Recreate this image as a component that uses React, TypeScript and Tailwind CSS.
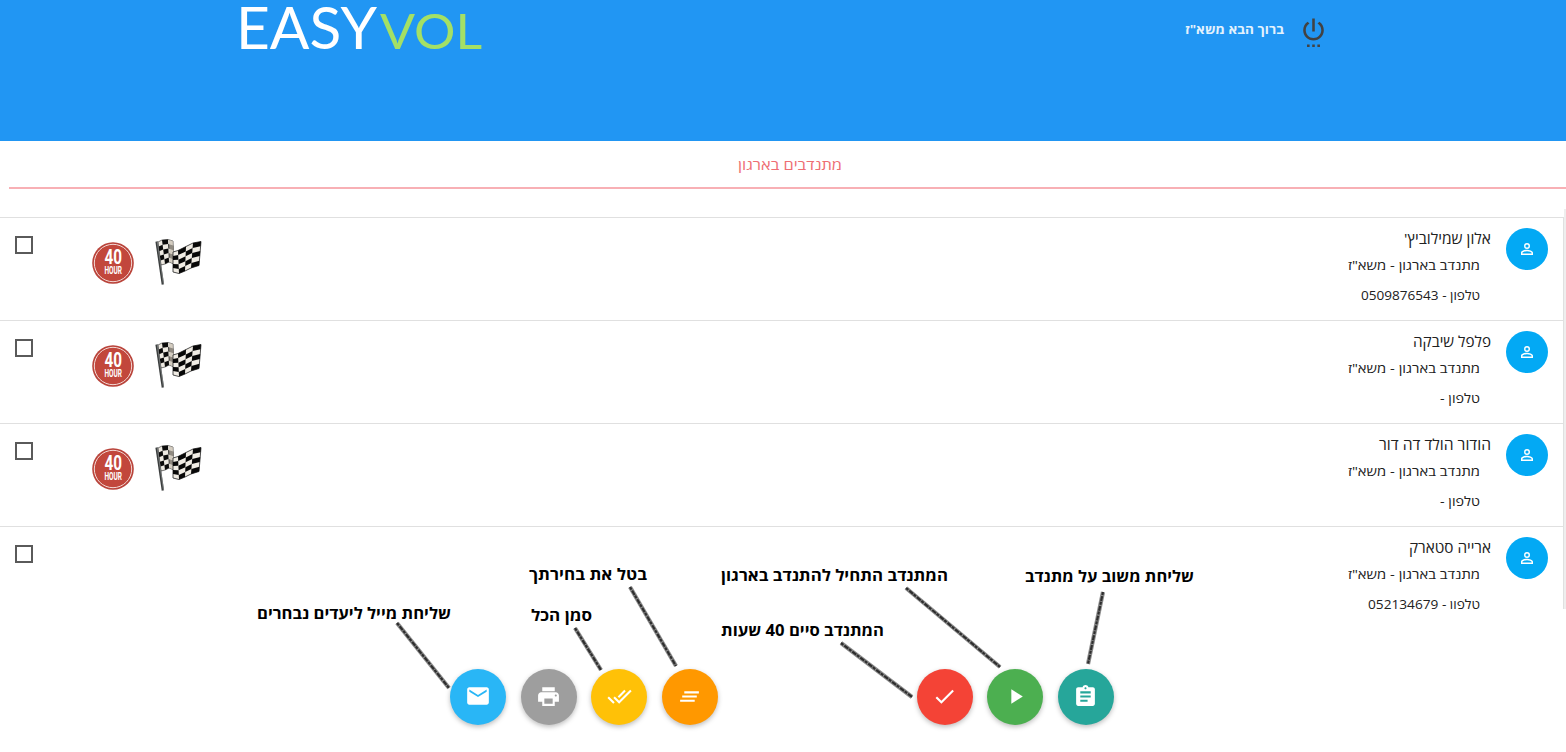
import type { ReactNode } from "react";

type Point = [number, number];

const volunteers = [
  { name: "אלון שמילוביץ'", nameWidth: 87, phone: "0509876543", phoneWidth: 119, awarded: true },
  { name: "פלפל שיבקה", nameWidth: 78, phone: "", phoneWidth: 40, awarded: true },
  { name: "הודור הולד דה דור", nameWidth: 112, phone: "", phoneWidth: 40, awarded: true },
  { name: "ארייה סטארק", nameWidth: 82, phone: "052134679", phoneWidth: 112, awarded: false },
];

/* Builds the dark squares of a chequered cloth stretched between two edges. */
function darkSquares(top: Point[], bottom: Point[], rows: number, parity: number) {
  const at = (c: number, r: number) => {
    const t = r / rows;
    return `${top[c][0] + (bottom[c][0] - top[c][0]) * t},${top[c][1] + (bottom[c][1] - top[c][1]) * t}`;
  };
  const out: string[] = [];
  for (let c = 0; c < top.length - 1; c++)
    for (let r = 0; r < rows; r++)
      if ((c + r) % 2 === parity) out.push([at(c, r), at(c + 1, r), at(c + 1, r + 1), at(c, r + 1)].join(" "));
  return out;
}

const leftTop: Point[] = [[10, 10], [14, 8], [20, 7.5], [25, 9]];
const leftBottom: Point[] = [[13, 33], [17, 32], [21, 30], [26, 32]];
const rightTop: Point[] = [[25, 20], [30, 18.5], [38, 14.5], [45, 11], [53, 9.5]];
const rightBottom: Point[] = [[25, 40], [31, 41.5], [37, 39], [43, 36], [51, 33.5]];
const outline = (a: Point[], b: Point[]) => [...a, ...[...b].reverse()].map((p) => p.join(",")).join(" ");

function Flag() {
  return (
    <svg width="60" height="60" viewBox="0 0 60 60" strokeLinejoin="round">
      <polygon points={outline(leftTop, leftBottom)} fill="#eeeae2" stroke="#222" strokeWidth=".6" />
      {darkSquares(leftTop, leftBottom, 5, 1).map((p) => <polygon key={p} points={p} fill="#0b0b0b" />)}
      <path d="M21 8l4 1 .6 11-.6 11-3.5-1z" fill="#c9c0b4" opacity=".7" />
      <polygon points={outline(rightTop, rightBottom)} fill="#f0ece4" stroke="#222" strokeWidth=".8" />
      {darkSquares(rightTop, rightBottom, 5, 1).map((p) => <polygon key={p} points={p} fill="#080808" />)}
      <path d="M8.6 9.5l6.3 43" stroke="#3a3d3d" strokeWidth="2.4" />
      <path d="M9.3 10l6.2 42" stroke="#9a9e9e" strokeWidth=".6" />
    </svg>
  );
}

function Badge() {
  return (
    <svg width="42" height="42" viewBox="0 0 42 42">
      <circle cx="21" cy="21" r="20.8" fill="#b9433a" />
      <circle cx="21" cy="21" r="18.7" fill="#c2473c" stroke="#f3dad6" strokeWidth="1" />
      <text x="12.5" y="22.3" textLength="17.5" lengthAdjust="spacingAndGlyphs" fontFamily="Roboto, sans-serif" fontWeight="700" fontSize="20" fill="#fff">40</text>
      <text x="12.5" y="32" textLength="17.5" lengthAdjust="spacingAndGlyphs" fontFamily="Roboto, sans-serif" fontWeight="700" fontSize="10.5" fill="#fff">HOUR</text>
    </svg>
  );
}

/* A right-to-left line of text fitted to a measured width. */
function Line({ children, width, size, y = 16, bold = false, fill = "#212121" }: { children: string; width: number; size: number; y?: number; bold?: boolean; fill?: string }) {
  return (
    <svg width={width} height="22" className="block shrink-0 overflow-visible">
      <text x={width} y={y} direction="rtl" textLength={width} lengthAdjust="spacingAndGlyphs" fontFamily="'Open Sans', 'Noto Sans', sans-serif" fontSize={size} fontWeight={bold ? 700 : 400} fill={fill}>{children}</text>
    </svg>
  );
}

function Icon({ d, size = 24, fill = "#fff" }: { d: string; size?: number; fill?: string }) {
  return <svg width={size} height={size} viewBox="0 0 24 24"><path d={d} fill={fill} /></svg>;
}

function Fab({ color, children }: { color: string; children: ReactNode }) {
  return (
    <button className={`flex size-14 shrink-0 items-center justify-center rounded-full pb-0.5 shadow-[0_2px_5px_rgba(0,0,0,0.26)] ${color}`}>
      {children}
    </button>
  );
}

const notes = [
  { text: "שליחת מייל ליעדים נבחרים", box: "left-[257px] top-[603px]", width: 194 },
  { text: "בטל את בחירתך", box: "left-[529px] top-[564px]", width: 118 },
  { text: "סמן הכל", box: "left-[531px] top-[605px]", width: 61 },
  { text: "המתנדב התחיל להתנדב בארגון", box: "left-[721px] top-[565px]", width: 227 },
  { text: "המתנדב סיים 40 שעות", box: "left-[721px] top-[620px]", width: 163 },
  { text: "שליחת משוב על מתנדב", box: "left-[1025px] top-[566px]", width: 169 },
];

const pointers = [
  [397, 623, 449, 688],
  [630, 587, 676, 666],
  [575, 628, 601, 670],
  [906, 588, 1000, 667],
  [841, 643, 912, 697],
  [1103, 592, 1088, 664],
];

export default function App() {
  return (
    <div className="relative flex h-[752px] w-[1566px] flex-col overflow-hidden bg-white">
      <header className="flex h-[141px] shrink-0 items-start justify-between bg-[#2196f3] pr-[237px] pl-[240px]">
        <svg width="242" height="60" viewBox="0 0 242 60" fontFamily="Lato, sans-serif" fontWeight="400">
          <text x="-4" y="49" textLength="141" lengthAdjust="spacingAndGlyphs" fontSize="59" fill="#fff">EASY</text>
          <text x="140" y="49" textLength="102" lengthAdjust="spacingAndGlyphs" fontSize="48.5" fill="#a4e065">VOL</text>
        </svg>
        <div className="flex items-start gap-3.5">
          <div className="pt-[18px]"><Line width={99} size={13} bold fill="#e3f2fd">ברוך הבא משא"ז</Line></div>
          <div className="pt-4">
            <Icon size={31} fill="#424242" d="M7 24h2v-2H7v2zm4 0h2v-2h-2v2zm2-22h-2v10h2V2zm3.56 2.44l-1.45 1.45C16.84 6.94 18 8.83 18 11c0 3.31-2.69 6-6 6s-6-2.69-6-6c0-2.17 1.16-4.06 2.88-5.12L7.44 4.44C5.36 5.88 4 8.28 4 11c0 4.42 3.58 8 8 8s8-3.58 8-8c0-2.72-1.36-5.12-3.44-6.56zM15 24h2v-2h-2v2z" />
          </div>
        </div>
      </header>

      <nav className="ml-[9px] flex h-12 shrink-0 items-start justify-center border-b-2 border-[#f8b0b5] pt-[13px] pl-[4px]">
        <Line width={104} size={14} fill="#ee6e73">מתנדבים בארגון</Line>
      </nav>

      <main className="mt-5 flex h-[400px] shrink-0 overflow-hidden pt-2">
        <ul className="w-[1564px] shrink-0 border-r border-[#e0e0e0]">
          {volunteers.map((v) => (
            <li key={v.name} className="flex h-[103px] items-start border-t border-[#e0e0e0]">
              <span className="mt-[18px] ml-[15px] size-[18px] border-2 border-[#5a5a5a]" />
              {v.awarded && (
                <div className="ml-[59px] flex items-start gap-[14px] pt-[14px]">
                  <div className="pt-[10px]"><Badge /></div>
                  <Flag />
                </div>
              )}
              <div className="mr-[15px] ml-auto flex gap-[15px] pt-2.5">
                <div className="flex flex-col items-end">
                  <Line width={v.nameWidth} size={15}>{v.name}</Line>
                  <div className="mt-1 mr-[11px] flex flex-col items-end gap-2">
                    <Line width={132} size={13}>מתנדב בארגון - משא"ז</Line>
                    <Line width={v.phoneWidth} size={13}>{v.phone ? `טלפון - ${v.phone}` : "טלפון -"}</Line>
                  </div>
                </div>
                <span className="flex size-[42px] items-center justify-center rounded-full bg-[#03a9f4]">
                  <Icon size={18} d="M12 5.9a2.1 2.1 0 1 1 0 4.2 2.1 2.1 0 0 1 0-4.2m0 9c2.97 0 6.1 1.46 6.1 2.1v1.1H5.9V17c0-.64 3.13-2.1 6.1-2.1M12 4a4 4 0 1 0 0 8 4 4 0 0 0 0-8zm0 9c-2.67 0-8 1.34-8 4v3h16v-3c0-2.66-5.33-4-8-4z" />
                </span>
              </div>
            </li>
          ))}
        </ul>
        <span className="-mt-2 flex-1 bg-[#eeeeee]" />
      </main>

      <footer className="flex pt-[60px] pl-[450px]">
        <div className="flex gap-[14.5px]">
          <Fab color="bg-[#29b6f6]"><Icon size={26} d="M20 4H4c-1.1 0-1.99.9-1.99 2L2 18c0 1.1.9 2 2 2h16c1.1 0 2-.9 2-2V6c0-1.1-.9-2-2-2zm0 4l-8 5-8-5V6l8 5 8-5v2z" /></Fab>
          <Fab color="bg-[#9e9e9e]"><Icon size={25} d="M19 8H5c-1.66 0-3 1.34-3 3v6h4v4h12v-4h4v-6c0-1.66-1.34-3-3-3zm-3 11H8v-5h8v5zm3-7c-.55 0-1-.45-1-1s.45-1 1-1 1 .45 1 1-.45 1-1 1zm-1-9H6v4h12V3z" /></Fab>
          <Fab color="bg-[#ffc107]"><Icon size={25} d="M18 7l-1.41-1.41-6.34 6.34 1.41 1.41L18 7zm4.24-1.41L11.66 16.17 7.48 12l-1.41 1.41L11.66 19l12-12-1.42-1.41zM.41 13.41L6 19l1.41-1.41L1.83 12 .41 13.41z" /></Fab>
          <Fab color="bg-[#ff9800]"><Icon size={25} d="M5 13h14v-2H5v2zm-2 4h14v-2H3v2zM7 7v2h14V7H7z" /></Fab>
        </div>
        <div className="ml-[199px] flex gap-[14.5px]">
          <Fab color="bg-[#f44336]"><Icon size={25} d="M9 16.17L4.83 12l-1.42 1.41L9 19 21 7l-1.41-1.41z" /></Fab>
          <Fab color="bg-[#4caf50]"><Icon size={25} d="M8 5v14l11-7z" /></Fab>
          <Fab color="bg-[#26a69a]"><Icon size={25} d="M19 3h-4.18C14.4 1.84 13.3 1 12 1c-1.3 0-2.4.84-2.82 2H5c-1.1 0-2 .9-2 2v14c0 1.1.9 2 2 2h14c1.1 0 2-.9 2-2V5c0-1.1-.9-2-2-2zm-7 0c.55 0 1 .45 1 1s-.45 1-1 1-1-.45-1-1 .45-1 1-1zm2 14H7v-2h7v2zm3-4H7v-2h10v2zm0-4H7V7h10v2z" /></Fab>
        </div>
      </footer>

      <svg width="1566" height="752" className="pointer-events-none absolute inset-0">
        {pointers.map(([x1, y1, x2, y2]) => (
          <g key={x1}>
            <line x1={x1} y1={y1} x2={x2} y2={y2} stroke="#8c8c8c" strokeWidth="4.2" />
            <line x1={x1} y1={y1} x2={x2} y2={y2} stroke="#2e2e2e" strokeWidth="2.2" strokeDasharray="3 1.2 5 .8" />
          </g>
        ))}
      </svg>
      {notes.map((n) => (
        <div key={n.text} className={`absolute ${n.box}`}><Line width={n.width} size={16} bold fill="#000">{n.text}</Line></div>
      ))}
    </div>
  );
}
